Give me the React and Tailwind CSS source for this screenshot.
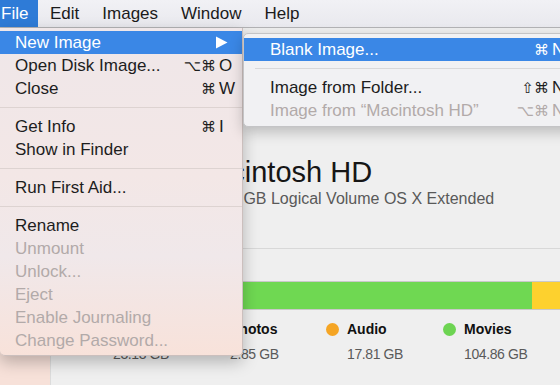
import React from 'react';

const font = { fontFamily: '"Liberation Sans", "DejaVu Sans", sans-serif' };

const MenuItem = ({ label, mods, k, hot, disabled, arrow, keyWidth = 'w-[26px]' }) => {
  const tone = hot ? 'bg-[#3a87e6] text-white' : disabled ? 'text-[#b2aaa9]' : 'text-[#1d1d1d]';
  return (
    <div className={`flex h-[23px] items-center pl-[15px] text-[17px] leading-[23px] ${tone}`}>
      <span className="flex-1 whitespace-nowrap">{label}</span>
      {arrow && (
        <svg width="13" height="13" viewBox="0 0 13 13" className="mr-[14px]">
          <polygon points="1,0.5 12.5,6.5 1,12.5" fill="currentColor" />
        </svg>
      )}
      {k && (
        <>
          <span className="text-right text-[15px] whitespace-nowrap" style={font}>{mods}</span>
          <span className={`${keyWidth} pl-[3px] text-[17px]`}>{k}</span>
        </>
      )}
    </div>
  );
};

const Sep = ({ color = 'bg-[#ddd3d1]' }) => (
  <div className="flex h-[15px] items-center">
    <div className={`h-px w-full ${color}`} />
  </div>
);

const legend = [
  { name: 'Apps', size: '23.13 GB', dot: 'bg-[#e0524c]' },
  { name: 'Photos', size: '2.85 GB', dot: 'bg-[#4a90e2]' },
  { name: 'Audio', size: '17.81 GB', dot: 'bg-[#f5a524]' },
  { name: 'Movies', size: '104.86 GB', dot: 'bg-[#6dd452]' },
];

export default function App() {
  return (
    <div className="relative h-[385px] w-[560px] overflow-hidden bg-[#ececec]" style={font}>
      {/* menu bar */}
      <div className="flex h-[28px] items-stretch border-b border-[#b4b4b6] bg-[linear-gradient(180deg,#f1f1f5,#e9e9ee)] text-[17px] text-[#1b1b1b]">
        <div className="flex w-[38px] items-center bg-[#2e7bd7] pl-[1px] text-white">File</div>
        <div className="flex items-center gap-[23px] pl-[12px]">
          <span>Edit</span>
          <span>Images</span>
          <span>Window</span>
          <span>Help</span>
        </div>
      </div>

      {/* window */}
      <div className="flex h-[357px]">
        <div className="w-[50px] shrink-0 bg-[#f7e1d9]" />
        <div className="min-w-0 flex-1 border-l border-[#dcdcdc] bg-[#efefef]">
          <div className="flex items-center pt-[124px] pl-[61px]">
            <div className="mr-[14px] h-[60px] w-[64px] shrink-0 rounded-md bg-[#cfcfcf]" />
            <div className="whitespace-nowrap">
              <div className="text-[29px] leading-[34px] text-[#161616]">Macintosh HD</div>
              <div className="text-[16px] leading-[20px] text-[#595959]">499.42 GB Logical Volume OS X Extended</div>
            </div>
          </div>

          <div className="mt-[36px] h-px bg-[#d8d8d8]" />

          <div className="mt-[32px] ml-[41px] flex h-[29px] w-[520px] border-y border-[#c9c9c9]">
            <div className="w-[60px] bg-[#e0524c]" />
            <div className="w-[30px] bg-[#4a90e2]" />
            <div className="w-[40px] bg-[#f5a524]" />
            <div className="w-[310px] bg-[#6fd852]" />
            <div className="flex-1 bg-[#fdd12e]" />
          </div>

          <div className="mt-[10px] ml-[41px] flex">
            {legend.map((l) => (
              <div key={l.name} className="flex w-[117px] shrink-0">
                <div className={`mt-[3px] h-[13px] w-[13px] shrink-0 rounded-full ${l.dot}`} />
                <div className="ml-[8px]">
                  <div className="text-[14px] leading-[18px] font-bold text-[#111]">{l.name}</div>
                  <div className="mt-[7px] text-[14px] leading-[18px] tracking-[-0.4px] whitespace-nowrap text-[#5a5a5a]">{l.size}</div>
                </div>
              </div>
            ))}
          </div>
        </div>
      </div>

      {/* File menu */}
      <div className="absolute top-[28px] left-0 w-[243px] rounded-b-[5px] border-r border-b border-[#cbbfbd] bg-[linear-gradient(180deg,#efe7e9_0%,#f3e7e6_45%,#f0e8ea_70%,#f8e2da_100%)] py-[3px] shadow-[0_6px_16px_rgba(0,0,0,0.25)]">
        <MenuItem label="New Image" hot arrow />
        <MenuItem label="Open Disk Image..." mods="⌥⌘" k="O" />
        <MenuItem label="Close" mods="⌘" k="W" />
        <Sep />
        <MenuItem label="Get Info" mods="⌘" k="I" />
        <MenuItem label="Show in Finder" />
        <Sep />
        <MenuItem label="Run First Aid..." />
        <Sep />
        <MenuItem label="Rename" />
        <MenuItem label="Unmount" disabled />
        <MenuItem label="Unlock..." disabled />
        <MenuItem label="Eject" disabled />
        <MenuItem label="Enable Journaling" disabled />
        <MenuItem label="Change Password..." disabled />
      </div>

      {/* New Image submenu */}
      <div className="absolute top-[33px] left-[243px] w-[340px] rounded-[5px] border border-[#c4c4c6] bg-[#f1f1f3] py-[4px] shadow-[0_5px_14px_rgba(0,0,0,0.22)]">
        <div className="bg-[#3a87e6] pl-[11px]">
          <MenuItem label="Blank Image..." mods="⌘" k="N" hot keyWidth="w-[33px]" />
        </div>
        <div className="pl-[11px]">
          <Sep color="bg-[#d8d8da]" />
          <MenuItem label="Image from Folder..." mods="⇧⌘" k="N" keyWidth="w-[33px]" />
          <MenuItem label="Image from “Macintosh HD”" mods="⌥⌘" k="N" disabled keyWidth="w-[33px]" />
        </div>
      </div>
    </div>
  );
}
